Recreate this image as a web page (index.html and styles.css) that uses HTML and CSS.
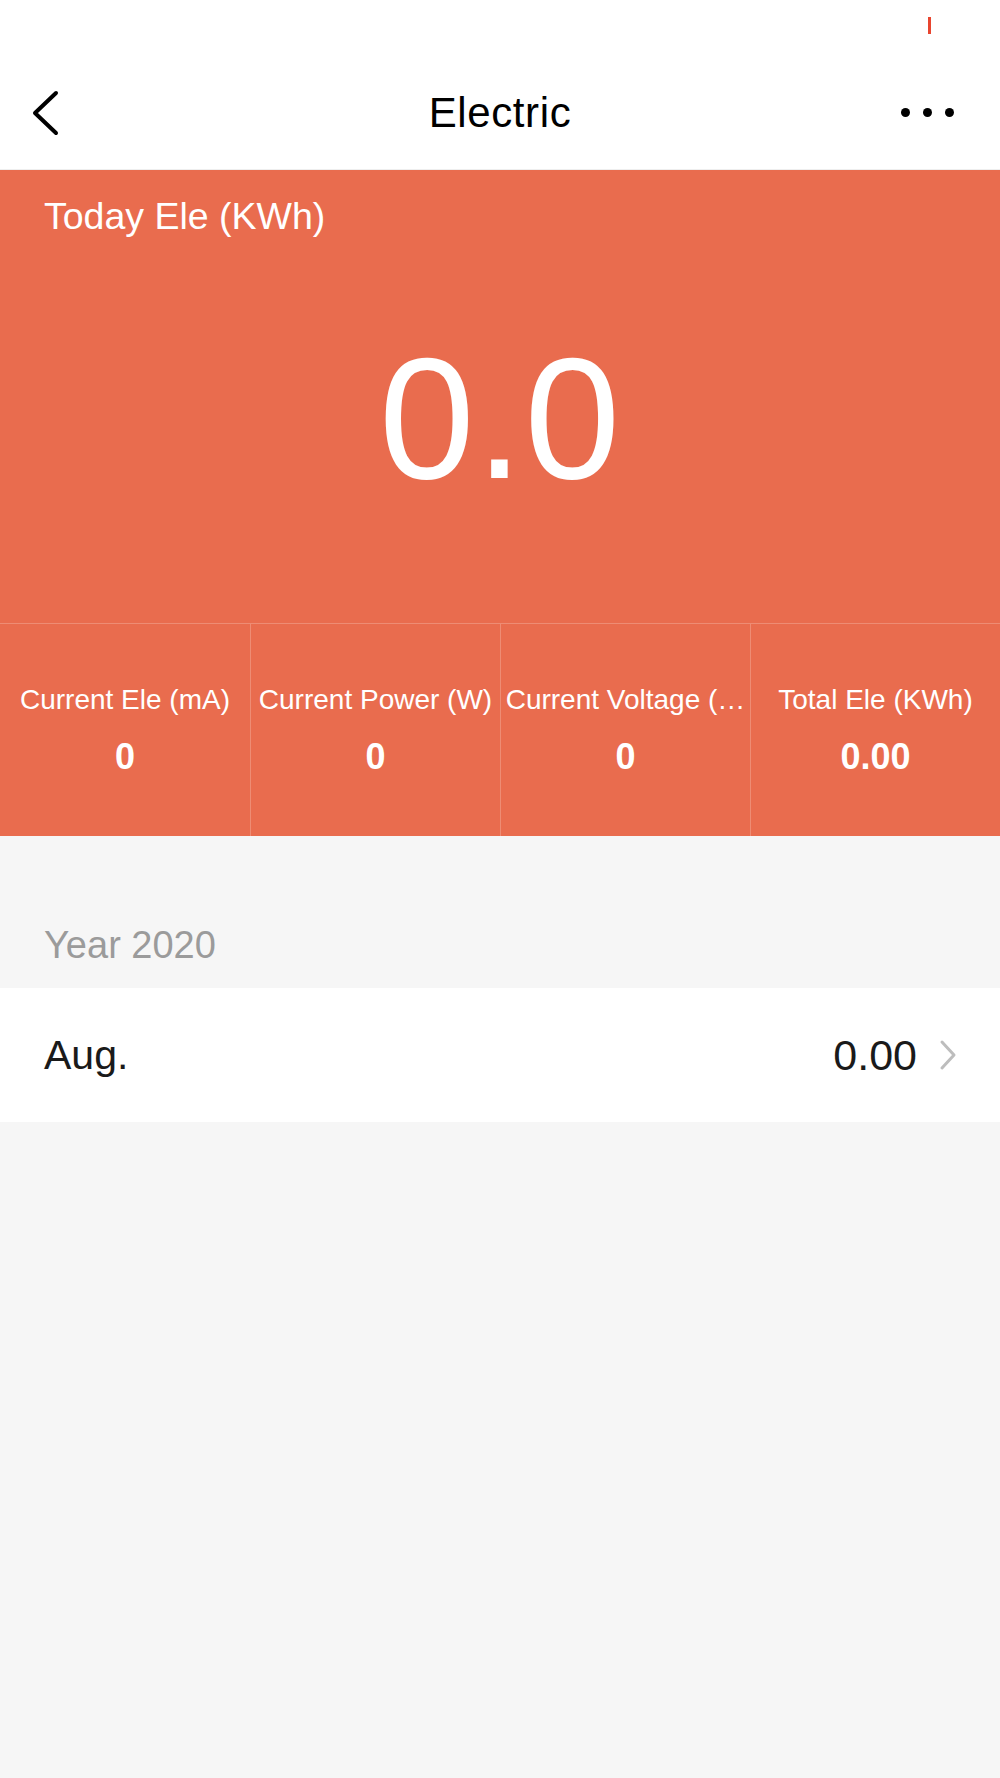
FILE: index.html
```html
<!DOCTYPE html>
<html lang="en">
<head>
  <meta charset="UTF-8">
  <title>Electric</title>
  <link rel="stylesheet" href="styles.css">
</head>
<body>
  <div class="statusbar"><span class="rec-tick"></span></div>

  <header class="navbar">
    <a class="nav-back" href="#">
      <svg width="30" height="46" viewBox="0 0 30 46"><path d="M26 3 L5 23 L26 43" fill="none" stroke="#000" stroke-width="4" stroke-linecap="round" stroke-linejoin="round"/></svg>
    </a>
    <h1 class="nav-title">Electric</h1>
    <div class="nav-more"><span></span><span></span><span></span></div>
  </header>

  <section class="hero">
    <div class="hero-label">Today Ele (KWh)</div>
    <div class="hero-value">0.0</div>
  </section>

  <section class="stats">
    <div class="stat">
      <div class="stat-label">Current Ele (mA)</div>
      <div class="stat-value">0</div>
    </div>
    <div class="stat">
      <div class="stat-label">Current Power (W)</div>
      <div class="stat-value">0</div>
    </div>
    <div class="stat">
      <div class="stat-label" title="Current Voltage (V)">Current Voltage (…</div>
      <div class="stat-value">0</div>
    </div>
    <div class="stat">
      <div class="stat-label">Total Ele (KWh)</div>
      <div class="stat-value">0.00</div>
    </div>
  </section>

  <div class="year-head">Year 2020</div>

  <a class="month-row" href="#">
    <span class="month-name">Aug.</span>
    <span class="month-value">0.00</span>
    <svg class="month-arrow" width="20" height="32" viewBox="0 0 20 32"><path d="M4 3 L16 16 L4 29" fill="none" stroke="#bdbdbd" stroke-width="3" stroke-linecap="round" stroke-linejoin="round"/></svg>
  </a>
</body>
</html>
```

FILE: styles.css
```css
body { margin: 0; font-family: "Liberation Sans", Arial, sans-serif; background: #f6f6f6; min-height: 1778px; }
a { text-decoration: none; color: inherit; }

.statusbar { height: 60px; background: #fff; display: flex; }
.rec-tick { width: 3px; height: 17px; background: #e8452f; margin: 17px 0 0 928px; }

.navbar { height: 110px; background: #fff; display: grid; grid-template-columns: 1fr auto 1fr; align-items: center; padding: 0 30px 4px; border-bottom: 1px solid #eee; box-sizing: border-box; }
.nav-back { display: flex; }
.nav-title { margin: 0; font-size: 42px; font-weight: normal; color: #000; letter-spacing: 0.6px; }
.nav-more { display: flex; gap: 13px; justify-content: flex-end; padding-right: 16px; }
.nav-more span { width: 9px; height: 9px; border-radius: 50%; background: #000; }

.hero { background: #e96c4e; height: 454px; box-sizing: border-box; padding: 25px 44px 0; color: #fff; border-bottom: 1px solid rgba(255,255,255,0.22); }
.hero-label { font-size: 37.5px; line-height: 43px; }
.hero-value { font-size: 172px; text-align: center; line-height: 1; margin-top: 94px; letter-spacing: 1px; }

.stats { background: #e96c4e; height: 212px; display: grid; grid-template-columns: repeat(4, 1fr); color: #fff; }
.stat { border-left: 1px solid rgba(255,255,255,0.22); display: flex; flex-direction: column; align-items: center; justify-content: center; gap: 20px; min-width: 0; padding: 0 2px; }
.stat:first-child { border-left: none; }
.stat-label { font-size: 28px; line-height: 32px; white-space: nowrap; }
.stat-value { font-size: 36px; line-height: 41px; font-weight: bold; }

.year-head { height: 152px; box-sizing: border-box; padding: 88px 44px 0; font-size: 38px; color: #9b9b9b; }

.month-row { height: 134px; background: #fff; display: flex; align-items: center; padding: 0 42px 0 44px; color: #1a1a1a; }
.month-name { font-size: 41px; flex: 1; }
.month-value { font-size: 43px; margin-right: 21px; }
```
